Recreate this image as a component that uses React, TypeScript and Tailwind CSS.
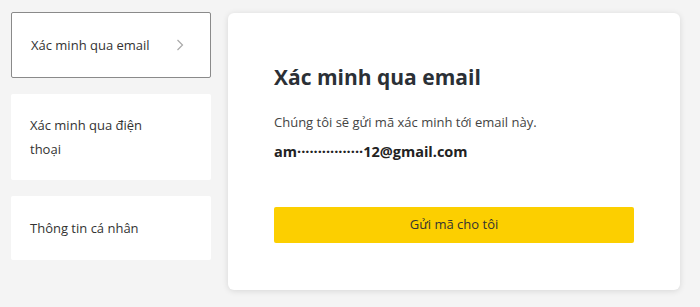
import React from 'react';

const items = [
  { label: 'Xác minh qua email', active: true, pad: 'py-[20px]' },
  { label: 'Xác minh qua điện thoại', active: false, pad: 'py-[19px]' },
  { label: 'Thông tin cá nhân', active: false, pad: 'py-[20px]' },
];

export default function App() {
  return (
    <div
      className="min-h-screen bg-[#f4f4f4] text-[#333] flex items-start gap-[17px] pl-[11px] pt-[12px]"
      style={{ fontFamily: '"Open Sans", "Noto Sans", sans-serif' }}
    >
      <div className="w-[200px] flex flex-col gap-4">
        {items.map((item) => (
          <div
            key={item.label}
            className={`flex items-center justify-between bg-white rounded-[2px] pl-[19px] pr-[26px] ${item.pad} text-[13px] leading-6 ${
              item.active ? 'border border-[#8a8a8a]' : 'px-[20px]'
            }`}
          >
            <span className={item.active ? '' : 'pr-[40px]'}>{item.label}</span>
            {item.active && (
              <svg width="8" height="12" viewBox="0 0 8 12" fill="none" className="shrink-0">
                <path d="M1.5 1L6.5 6L1.5 11" stroke="#a9a9a9" strokeWidth="1.2" />
              </svg>
            )}
          </div>
        ))}
      </div>

      <div className="mt-px w-[452px] bg-white rounded-md shadow-[0_1px_6px_rgba(0,0,0,0.12)] pl-[46px] pr-[46px] pt-[48px] pb-[47px]">
        <h2 className="text-[21px] font-bold leading-8 text-[#2b3036]">Xác minh qua email</h2>
        <p className="mt-[19px] text-[13px] leading-5 text-[#444]">
          Chúng tôi sẽ gửi mã xác minh tới email này.
        </p>
        <p className="mt-[10px] text-[14.5px] font-bold leading-5 text-[#222]">
          am················12@gmail.com
        </p>
        <button className="mt-[45px] w-full h-9 bg-[#fccf00] rounded-[2px] text-[13px] text-[#333]">
          Gửi mã cho tôi
        </button>
      </div>
    </div>
  );
}
